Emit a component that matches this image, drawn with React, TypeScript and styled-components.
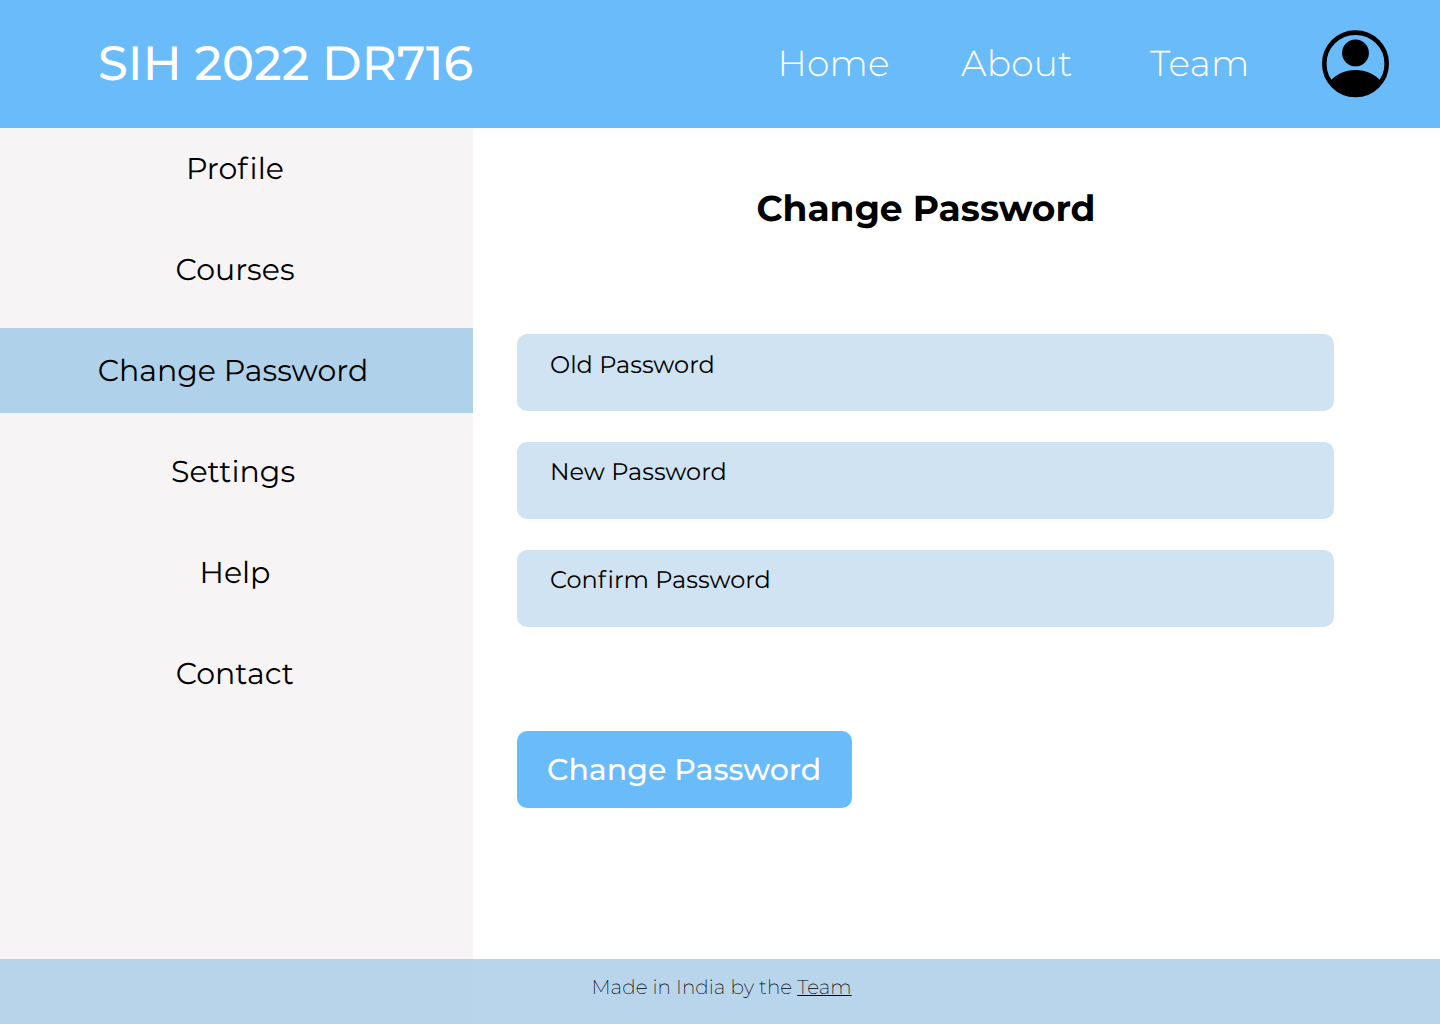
import React from "react";
import styled, { createGlobalStyle } from "styled-components";

const GlobalStyle = createGlobalStyle`
  *, *::before, *::after { box-sizing: border-box; }
  body {
    margin: 0;
    background: #ffffff;
    color: #000000;
    font-family: Montserrat, Inter, "Liberation Sans", sans-serif;
    font-variant-ligatures: none;
    text-rendering: geometricPrecision;
  }
  a { color: inherit; text-decoration: none; }
`;

const Page = styled.div`
  display: grid;
  grid-template-rows: 128px 831px 65px;
  width: 1440px;
  height: 1024px;
`;

const Header = styled.header`
  display: grid;
  grid-template-columns: 679px 1fr 67px;
  align-items: center;
  padding: 0 51px 0 98px;
  background: #6abbf9;
  color: #ffffff;
`;

const Brand = styled.div`
  font-size: 48px;
  font-weight: 500;
  line-height: 58px;
  white-space: nowrap;
`;

const Nav = styled.nav`
  display: grid;
  grid-template-columns: 183.5px 189px 1fr;
  padding-left: 0.6px;
`;

const NavLink = styled.a`
  font-size: 36px;
  font-weight: 300;
  line-height: 44px;
  letter-spacing: 0.2px;
`;

const Avatar = styled.svg`
  display: block;
  width: 67px;
  height: 68px;
  overflow: visible;
`;

const Body = styled.div`
  display: grid;
  grid-template-columns: 473px 1fr;
`;

const Sidebar = styled.aside`
  display: flex;
  flex-direction: column;
  gap: 16px;
  background: #f6f4f5;
`;

const SideItem = styled.a<{ $indent: number; $active?: boolean }>`
  height: 85px;
  padding: 24px 0 24px ${(p) => p.$indent}px;
  background: ${(p) => (p.$active ? "#b0d1ea" : "transparent")};
  font-size: 30px;
  line-height: 37px;
  white-space: nowrap;

  &:first-child {
    height: 83px;
    padding-top: 22px;
  }
`;

const Main = styled.main`
  display: flex;
  flex-direction: column;
  padding: 59px 106px 0 44px;
`;

const Title = styled.h1`
  margin: 0 0 103.4px;
  padding-left: 1px;
  text-align: center;
  font-size: 36px;
  font-weight: 700;
  line-height: 44px;
`;

const Form = styled.div`
  display: flex;
  flex-direction: column;
  align-items: flex-start;
`;

const Fields = styled.div`
  display: flex;
  flex-direction: column;
  gap: 30.8px;
  width: 100%;
  margin-bottom: 104.2px;
`;

const Field = styled.label`
  height: 76.9px;
  padding: 16.4px 33px;
  border-radius: 10px;
  background: #d0e3f2;
  font-size: 24px;
  line-height: 30px;
`;

const LooseF = styled.span`
  letter-spacing: 0.07em;
`;

const Submit = styled.button`
  width: 335px;
  height: 77px;
  padding: 0 0 0 30px;
  border: 0;
  border-radius: 10px;
  background: #6abbf9;
  color: #ffffff;
  font-family: inherit;
  font-size: 30px;
  font-weight: 500;
  line-height: 37px;
  text-align: left;
  text-rendering: inherit;
  white-space: nowrap;
`;

const Footer = styled.footer`
  padding: 17px 0 0 591.5px;
  background: linear-gradient(90deg, #b8d4eb 473px, #b9d5eb 473px);
  font-size: 20px;
  font-weight: 200;
  line-height: 24px;
  white-space: nowrap;
`;

const TeamLink = styled.a`
  text-decoration: underline;
  text-decoration-thickness: 1px;
`;

const navLinks = ["Home", "About", "Team"];

const sideItems = [
  { label: "Profile", indent: 186 },
  { label: "Courses", indent: 175.6 },
  { label: "Change Password", indent: 97.7, active: true },
  { label: "Settings", indent: 171 },
  { label: "Help", indent: 199.5 },
  { label: "Contact", indent: 175.7 },
];

const fields = ["Old Password", "New Password", "Confirm Password"];

/** Opens up the tight "fi" pair in a label. */
function Label({ text }: { text: string }) {
  const at = text.indexOf("fi");
  if (at < 0) return <>{text}</>;
  return (
    <>
      {text.slice(0, at)}
      <LooseF>f</LooseF>
      {text.slice(at + 1)}
    </>
  );
}

export default function App() {
  return (
    <>
      <GlobalStyle />
      <Page>
        <Header>
          <Brand>SIH 2022 DR716</Brand>
          <Nav>
            {navLinks.map((label) => (
              <NavLink key={label}>{label}</NavLink>
            ))}
          </Nav>
          <Avatar viewBox="0 0 67 68" aria-label="Account">
            <circle cx="33.5" cy="33.8" r="31.2" fill="none" stroke="#000" strokeWidth="4.6" />
            <circle cx="33.5" cy="22.9" r="13.4" />
            <path d="M7.5 51.8C14 44 23 40 33.5 40S53 44 59.5 51.8A31.5 31.5 0 0 1 7.5 51.8Z" />
          </Avatar>
        </Header>
        <Body>
          <Sidebar>
            {sideItems.map((item) => (
              <SideItem key={item.label} $indent={item.indent} $active={item.active}>
                <Label text={item.label} />
              </SideItem>
            ))}
          </Sidebar>
          <Main>
            <Title>Change Password</Title>
            <Form>
              <Fields>
                {fields.map((label) => (
                  <Field key={label}>
                    <Label text={label} />
                  </Field>
                ))}
              </Fields>
              <Submit type="button">Change Password</Submit>
            </Form>
          </Main>
        </Body>
        <Footer>
          Made in India by the <TeamLink>Team</TeamLink>
        </Footer>
      </Page>
    </>
  );
}
